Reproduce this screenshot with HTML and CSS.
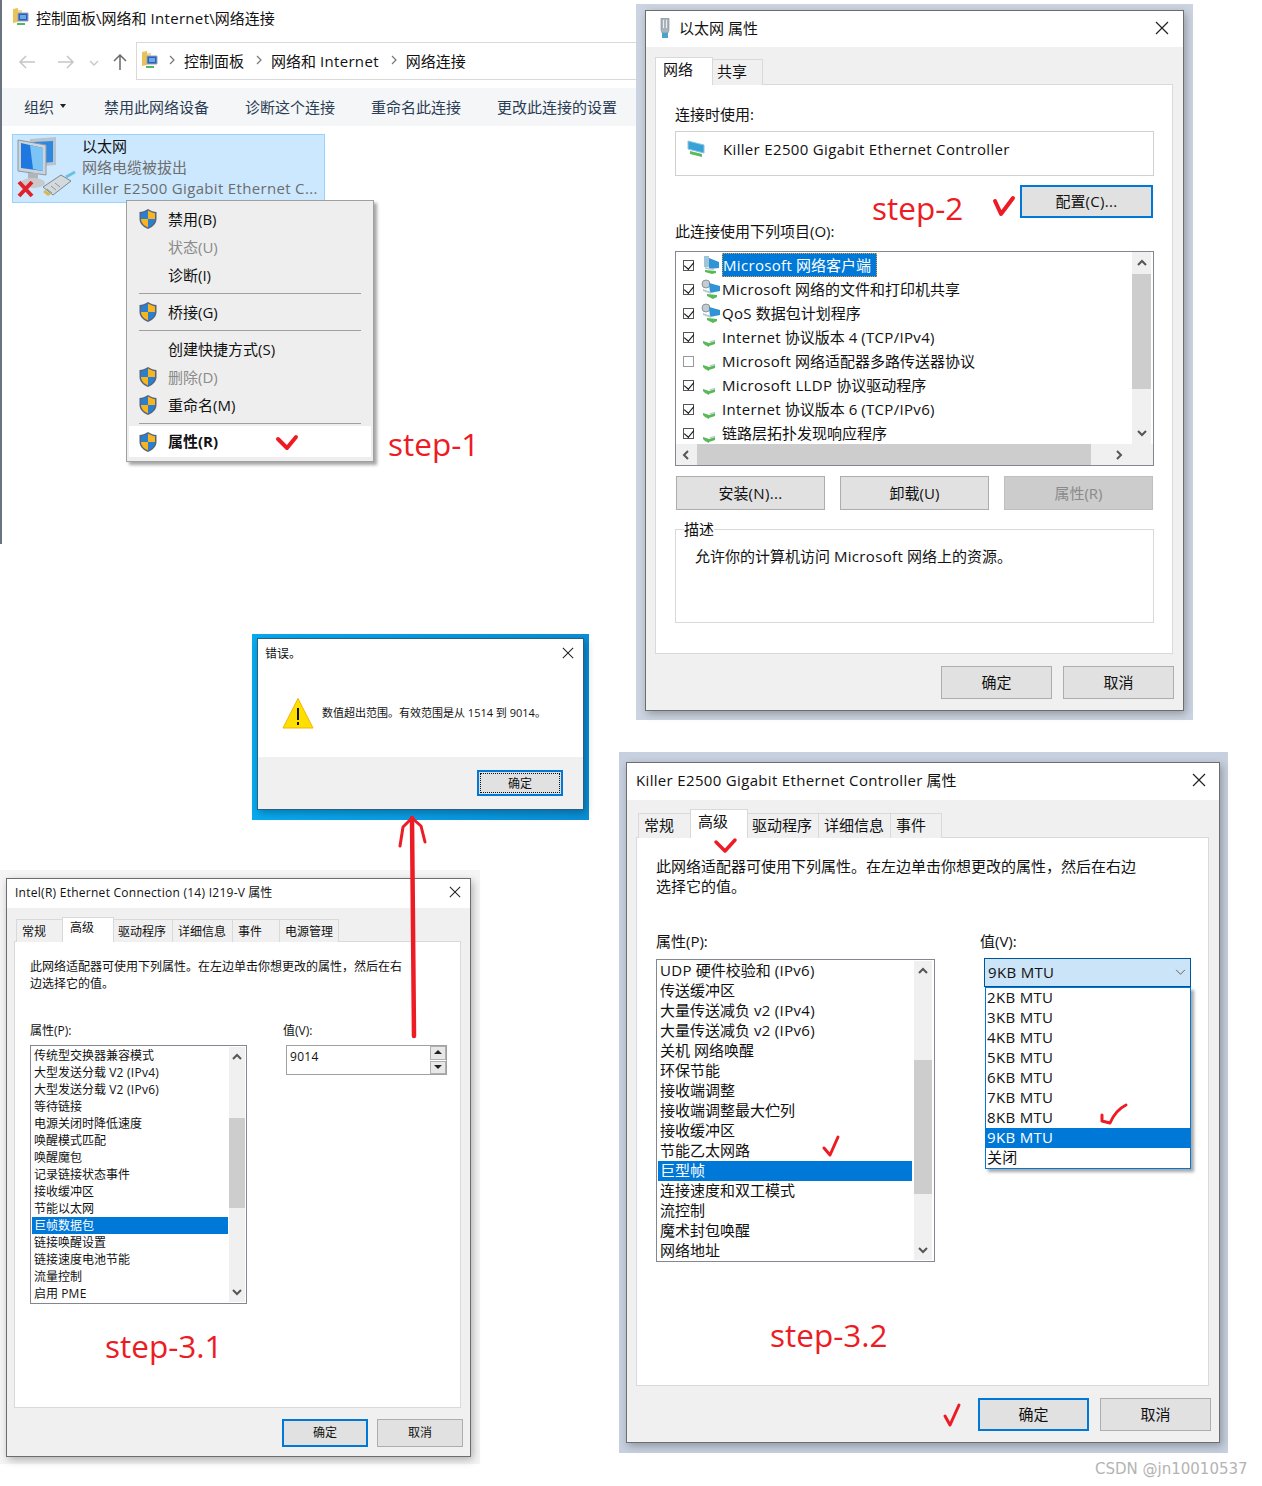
FILE: index.html
```html
<!DOCTYPE html>
<html lang="zh-CN">
<head>
    <meta charset="UTF-8">
    <title>网络连接 巨型帧设置</title>
    <link rel="stylesheet" href="styles.css">
</head>
<body>
<svg class="sprites" aria-hidden="true">
    <symbol id="shield" viewBox="0 0 20 22">
        <path d="M10 1C7 3 4 4 1.500 4v7c0 5 4.500 8.500 8.500 10 4-1.500 8.500-5 8.500-10V4C16 4 13 3 10 1z" fill="#55657f"/>
        <path d="M10 2.500C7.500 4 5 5 3 5.200V11h7z" fill="#2a7fd0"/>
        <path d="M10 2.500c2.500 1.500 5 2.500 7 2.700V11h-7z" fill="#f9b51e"/>
        <path d="M3 11h7v8.400C6.500 18 3 15 3 11z" fill="#f9b51e"/>
        <path d="M17 11h-7v8.400c3.500-1.400 7-4.400 7-8.400z" fill="#2a7fd0"/>
    </symbol>
    <symbol id="close" viewBox="0 0 14 14"><path d="M1 1l12 12M13 1L1 13" fill="none" stroke="#222" stroke-width="1.200"/></symbol>
    <symbol id="up" viewBox="0 0 12 8"><path d="M2 6l4-4 4 4" fill="none" stroke="#555" stroke-width="2"/></symbol>
    <symbol id="down" viewBox="0 0 12 8"><path d="M2 2l4 4 4-4" fill="none" stroke="#555" stroke-width="2"/></symbol>
    <symbol id="left" viewBox="0 0 8 12"><path d="M6 2L2 6l4 4" fill="none" stroke="#555" stroke-width="2"/></symbol>
    <symbol id="right" viewBox="0 0 8 12"><path d="M2 2l4 4-4 4" fill="none" stroke="#555" stroke-width="2"/></symbol>
    <symbol id="crumb" viewBox="0 0 8 12"><path d="M2 2l4 4-4 4" fill="none" stroke="#777" stroke-width="1.200"/></symbol>
    <symbol id="folder" viewBox="0 0 18 18">
        <path d="M1 1l5-1v14l-5 1z" fill="#e8c35a"/>
        <path d="M6 2h4v3H6z" fill="#f2d98a"/>
        <path d="M6 5h10v8H6z" fill="#2a5fc0" stroke="#9aa6b4"/>
        <path d="M8 7h6v4H8z" fill="#6aa8e8"/>
        <path d="M5 15h8v2H5z" fill="#55b560"/>
    </symbol>
    <symbol id="nic" viewBox="0 0 18 18">
        <path d="M1 2l16 4v8L1 10z" fill="#3aa0d8" stroke="#8ac4dc"/>
        <path d="M3 12l12 3v3L3 15z" fill="#5cb85c"/>
    </symbol>
    <symbol id="client" viewBox="0 0 20 20">
        <path d="M3 1h5v11H3z" fill="#9fc4d8"/>
        <path d="M8 3l10 4v6l-10 1z" fill="#2f93d6"/>
        <path d="M4 12l9 2v1l-9-1z" fill="#b8c8d0"/>
        <path d="M4 15l11 1v2l-4 1-7-2z" fill="#57b957"/>
    </symbol>
    <symbol id="service" viewBox="0 0 20 20">
        <circle cx="5" cy="5" r="4" fill="#c4ccd2" stroke="#8a949c"/>
        <path d="M8 4l11 3v5l-10 2z" fill="#2f93d6"/>
        <path d="M2 10l8 3v2l-8-3z" fill="#b8c8d0"/>
        <path d="M6 15l10 1v2l-4 2-6-3z" fill="#57b957"/>
    </symbol>
    <symbol id="proto" viewBox="0 0 20 20">
        <path d="M2 14l6 2 6-2v3l-6 2v1l-4-2-2-2z" fill="#57b957"/>
        <path d="M9 14l5-1v1l-5 1z" fill="#b7c4bb"/>
    </symbol>
    <symbol id="plug" viewBox="0 0 12 20">
        <path d="M2 0h8v12l-1 3H3l-1-3z" fill="#a9b4bc" stroke="#7f8b94" stroke-width=".6"/>
        <path d="M4 2h1v8H4zM7 2h1v8H7z" fill="#e9eef1"/>
        <path d="M3 15h6v5H3z" fill="#4aa3c8"/>
    </symbol>
</svg>

<main class="canvas">
    <!-- Explorer behind the context menu -->
    <section class="explorer">
        <div class="ex-title"><svg class="ic-folder"><use href="#folder"/></svg><span>控制面板\网络和 <span class="la">Internet</span>\网络连接</span></div>
        <div class="ex-nav">
            <svg class="nav-arrows" viewBox="0 0 112 20">
                <path d="M2 10h15M8 4l-6 6 6 6" fill="none" stroke="#c6c6c6" stroke-width="1.500"/>
                <path d="M40 10h15M49 4l6 6-6 6" fill="none" stroke="#c6c6c6" stroke-width="1.500"/>
                <path d="M72 9l4 4 4-4" fill="none" stroke="#c6c6c6" stroke-width="1.300"/>
                <path d="M102 18V4M96 9l6-6 6 6" fill="none" stroke="#6a6a6a" stroke-width="1.500"/>
            </svg>
            <div class="ex-address">
                <svg class="ic-folder"><use href="#folder"/></svg>
                <svg class="ic-crumb"><use href="#crumb"/></svg><span>控制面板</span>
                <svg class="ic-crumb"><use href="#crumb"/></svg><span>网络和 <span class="la">Internet</span></span>
                <svg class="ic-crumb"><use href="#crumb"/></svg><span>网络连接</span>
            </div>
        </div>
        <div class="ex-toolbar">
            <span class="organize">组织<i class="caret"></i></span>
            <span>禁用此网络设备</span>
            <span>诊断这个连接</span>
            <span>重命名此连接</span>
            <span>更改此连接的设置</span>
        </div>
        <div class="conn-item">
            <svg class="ic-net" viewBox="0 0 60 63">
                <path d="M14 2l26-2v28l-26 2z" fill="#b8c4d0"/>
                <path d="M17 5l20-1v21l-20 2z" fill="#2f88e0"/>
                <path d="M2 3l28 5v30L2 34z" fill="#ccd4da" stroke="#8a97a4"/>
                <path d="M5 6l22 5v23L5 31z" fill="#1f78e0"/>
                <path d="M14 8l13 3v23l-10-2z" fill="#7cc4f5"/>
                <path d="M12 36h10v6H12z" fill="#aeb6bc"/>
                <ellipse cx="17" cy="46" rx="12" ry="5" fill="#c9c9c9"/>
                <path d="M27 50l18-12 10 6-18 14z" fill="#d3d9dd" stroke="#7a8a8a"/>
                <path d="M31 52l5 4M35 49l5 4M39 46l5 4" stroke="#8a9a9a"/>
                <path d="M29 53l6 4-3 2-5-4z" fill="#d9b84a"/>
                <path d="M50 40l9-5" stroke="#6cc0e0" stroke-width="3"/>
                <path d="M3 45l13 14M16 45L3 59" stroke="#e3202a" stroke-width="4"/>
            </svg>
            <div class="conn-text">
                <div class="conn-name">以太网</div>
                <div>网络电缆被拔出</div>
                <div class="la">Killer E2500 Gigabit Ethernet C...</div>
            </div>
        </div>

        <div class="ctx-menu">
            <div class="ctx-row"><svg class="ic-shield"><use href="#shield"/></svg>禁用(B)</div>
            <div class="ctx-row off"><span class="ic-shield"></span>状态(U)</div>
            <div class="ctx-row"><span class="ic-shield"></span>诊断(I)</div>
            <div class="ctx-sep"></div>
            <div class="ctx-row"><svg class="ic-shield"><use href="#shield"/></svg>桥接(G)</div>
            <div class="ctx-sep"></div>
            <div class="ctx-row"><span class="ic-shield"></span>创建快捷方式(S)</div>
            <div class="ctx-row off"><svg class="ic-shield"><use href="#shield"/></svg>删除(D)</div>
            <div class="ctx-row"><svg class="ic-shield"><use href="#shield"/></svg>重命名(M)</div>
            <div class="ctx-sep ctx-sep-last"></div>
            <div class="ctx-row ctx-active"><svg class="ic-shield"><use href="#shield"/></svg>属性(R)</div>
        </div>
    </section>

    <!-- step-2 -->
    <section class="band band-eth">
        <div class="win">
            <div class="titlebar title-eth"><svg class="ic-plug"><use href="#plug"/></svg><span>以太网 属性</span><svg class="ic-close"><use href="#close"/></svg></div>
            <div class="win-body body-eth">
                <div class="tabs tabs-eth">
                    <div class="tab active">网络</div>
                    <div class="tab">共享</div>
                </div>
                <div class="panel panel-eth">
                    <div class="line">连接时使用:</div>
                    <div class="adapter-box"><svg class="ic-nic"><use href="#nic"/></svg><span class="la">Killer E2500 Gigabit Ethernet Controller</span></div>
                    <div class="config-row"><button class="btn btn-focus btn-config">配置<span class="la">(C)...</span></button></div>
                    <div class="line line-items">此连接使用下列项目(O):</div>
                    <div class="item-list">
                        <div class="item-rows">
                            <div class="item"><i class="cb on"></i><svg class="ic-row"><use href="#client"/></svg><span class="item-sel"><span class="la">Microsoft</span> 网络客户端</span></div>
                            <div class="item"><i class="cb on"></i><svg class="ic-row"><use href="#service"/></svg><span><span class="la">Microsoft</span> 网络的文件和打印机共享</span></div>
                            <div class="item"><i class="cb on"></i><svg class="ic-row"><use href="#service"/></svg><span><span class="la">QoS</span> 数据包计划程序</span></div>
                            <div class="item"><i class="cb on"></i><svg class="ic-row"><use href="#proto"/></svg><span><span class="la">Internet</span> 协议版本 4 <span class="la">(TCP/IPv4)</span></span></div>
                            <div class="item"><i class="cb"></i><svg class="ic-row"><use href="#proto"/></svg><span><span class="la">Microsoft</span> 网络适配器多路传送器协议</span></div>
                            <div class="item"><i class="cb on"></i><svg class="ic-row"><use href="#proto"/></svg><span><span class="la">Microsoft LLDP</span> 协议驱动程序</span></div>
                            <div class="item"><i class="cb on"></i><svg class="ic-row"><use href="#proto"/></svg><span><span class="la">Internet</span> 协议版本 6 <span class="la">(TCP/IPv6)</span></span></div>
                            <div class="item"><i class="cb on"></i><svg class="ic-row"><use href="#proto"/></svg><span>链路层拓扑发现响应程序</span></div>
                        </div>
                        <div class="vscroll vscroll-eth">
                            <svg class="sb-arrow"><use href="#up"/></svg>
                            <div class="sb-thumb"></div>
                            <svg class="sb-arrow sb-end"><use href="#down"/></svg>
                        </div>
                        <div class="hscroll">
                            <svg class="sb-harrow"><use href="#left"/></svg>
                            <div class="sb-hthumb"></div>
                            <svg class="sb-harrow sb-hright"><use href="#right"/></svg>
                        </div>
                    </div>
                    <div class="action-row">
                        <button class="btn">安装<span class="la">(N)...</span></button>
                        <button class="btn">卸载(U)</button>
                        <button class="btn btn-off">属性(R)</button>
                    </div>
                    <fieldset class="desc">
                        <legend>描述</legend>
                        <div class="desc-text">允许你的计算机访问 <span class="la">Microsoft</span> 网络上的资源。</div>
                    </fieldset>
                </div>
                <div class="footer footer-lg">
                    <button class="btn">确定</button>
                    <button class="btn">取消</button>
                </div>
            </div>
        </div>
    </section>

    <!-- error box -->
    <section class="band band-err">
        <div class="win win-err">
            <div class="titlebar title-err"><span>错误。</span><svg class="ic-close"><use href="#close"/></svg></div>
            <div class="err-msg">
                <svg class="ic-warn" viewBox="0 0 32 32">
                    <path d="M16 1.500L31 31H1z" fill="#ffdf00" stroke="#f5b400"/>
                    <path d="M15 11h2v12h-2zM15 25h2v3h-2z" fill="#111"/>
                </svg>
                <span>数值超出范围。有效范围是从 1514 到 9014。</span>
            </div>
            <div class="err-footer"><button class="btn btn-focus btn-err"><span>确定</span></button></div>
        </div>
    </section>

    <!-- step-3.1 -->
    <section class="band band-intel">
        <div class="win">
            <div class="titlebar title-intel"><span><span class="la">Intel(R) Ethernet Connection (14) I219-V</span> 属性</span><svg class="ic-close"><use href="#close"/></svg></div>
            <div class="win-body body-intel">
                <div class="tabs tabs-intel">
                    <div class="tab">常规</div>
                    <div class="tab active">高级</div>
                    <div class="tab">驱动程序</div>
                    <div class="tab">详细信息</div>
                    <div class="tab">事件</div>
                    <div class="tab">电源管理</div>
                </div>
                <div class="panel panel-intel">
                    <p class="hint">此网络适配器可使用下列属性。在左边单击你想更改的属性，然后在右<br>边选择它的值。</p>
                    <div class="prop-grid">
                        <div class="prop-col">
                            <div class="line">属性(P):</div>
                            <div class="prop-list">
                                <div class="prop-rows">
                                    <div>传统型交换器兼容模式</div>
                                    <div>大型发送分载 <span class="la">V2 (IPv4)</span></div>
                                    <div>大型发送分载 <span class="la">V2 (IPv6)</span></div>
                                    <div>等待链接</div>
                                    <div>电源关闭时降低速度</div>
                                    <div>唤醒模式匹配</div>
                                    <div>唤醒魔包</div>
                                    <div>记录链接状态事件</div>
                                    <div>接收缓冲区</div>
                                    <div>节能以太网</div>
                                    <div class="sel">巨帧数据包</div>
                                    <div>链接唤醒设置</div>
                                    <div>链接速度电池节能</div>
                                    <div>流量控制</div>
                                    <div>启用 <span class="la">PME</span></div>
                                </div>
                                <div class="vscroll vscroll-intel">
                                    <svg class="sb-arrow"><use href="#up"/></svg>
                                    <div class="sb-thumb"></div>
                                    <svg class="sb-arrow sb-end"><use href="#down"/></svg>
                                </div>
                            </div>
                        </div>
                        <div class="value-col">
                            <div class="line">值(V):</div>
                            <div class="spin-input">
                                <span class="la">9014</span>
                                <div class="spin"><i class="spin-up"></i><i class="spin-down"></i></div>
                            </div>
                        </div>
                    </div>
                </div>
                <div class="footer footer-sm">
                    <button class="btn btn-focus">确定</button>
                    <button class="btn">取消</button>
                </div>
            </div>
        </div>
    </section>

    <!-- step-3.2 -->
    <section class="band band-killer">
        <div class="win">
            <div class="titlebar title-killer"><span><span class="la">Killer E2500 Gigabit Ethernet Controller</span> 属性</span><svg class="ic-close"><use href="#close"/></svg></div>
            <div class="win-body body-killer">
                <div class="tabs tabs-killer">
                    <div class="tab">常规</div>
                    <div class="tab active">高级</div>
                    <div class="tab">驱动程序</div>
                    <div class="tab">详细信息</div>
                    <div class="tab">事件</div>
                </div>
                <div class="panel panel-killer">
                    <p class="hint">此网络适配器可使用下列属性。在左边单击你想更改的属性，然后在右边<br>选择它的值。</p>
                    <div class="prop-grid">
                        <div class="prop-col">
                            <div class="line">属性(P):</div>
                            <div class="prop-list">
                                <div class="prop-rows">
                                    <div><span class="la">UDP</span> 硬件校验和 <span class="la">(IPv6)</span></div>
                                    <div>传送缓冲区</div>
                                    <div>大量传送减负 <span class="la">v2 (IPv4)</span></div>
                                    <div>大量传送减负 <span class="la">v2 (IPv6)</span></div>
                                    <div>关机 网络唤醒</div>
                                    <div>环保节能</div>
                                    <div>接收端调整</div>
                                    <div>接收端调整最大伫列</div>
                                    <div>接收缓冲区</div>
                                    <div>节能乙太网路</div>
                                    <div class="sel">巨型帧</div>
                                    <div>连接速度和双工模式</div>
                                    <div>流控制</div>
                                    <div>魔术封包唤醒</div>
                                    <div>网络地址</div>
                                </div>
                                <div class="vscroll vscroll-killer">
                                    <svg class="sb-arrow"><use href="#up"/></svg>
                                    <div class="sb-thumb"></div>
                                    <svg class="sb-arrow sb-end"><use href="#down"/></svg>
                                </div>
                            </div>
                        </div>
                        <div class="value-col">
                            <div class="line">值(V):</div>
                            <div class="combo">
                                <span class="la">9KB MTU</span>
                                <svg class="combo-chev" viewBox="0 0 12 8"><path d="M1 1l5 5 5-5" fill="none" stroke="#555"/></svg>
                                <div class="combo-list la">
                                    <div>2KB MTU</div>
                                    <div>3KB MTU</div>
                                    <div>4KB MTU</div>
                                    <div>5KB MTU</div>
                                    <div>6KB MTU</div>
                                    <div>7KB MTU</div>
                                    <div>8KB MTU</div>
                                    <div class="sel">9KB MTU</div>
                                    <div>关闭</div>
                                </div>
                            </div>
                        </div>
                    </div>
                </div>
                <div class="footer footer-lg">
                    <button class="btn btn-focus">确定</button>
                    <button class="btn">取消</button>
                </div>
            </div>
        </div>
    </section>

    <!-- hand drawn marks on top of the screenshots -->
    <svg class="marks" viewBox="0 0 1262 1486">
        <g fill="none" stroke="#ed1c24" stroke-linecap="round" stroke-linejoin="round">
            <path d="M278 439l9 9 9-11" stroke-width="4"/>
            <path d="M995 201l6 13 12-16" stroke-width="4"/>
            <path d="M716 842l9 9 10-11" stroke-width="3.500"/>
            <path d="M824 1148l6 7 8-18" stroke-width="3"/>
            <path d="M1126 1105c-8 4-13 11-16 18l-8-2 0-6" stroke-width="3"/>
            <path d="M945 1416l5 9 9-20" stroke-width="3"/>
            <path d="M414 1036l-1-110-1-108" stroke-width="4.500"/>
            <path d="M400 846l3-19 9-9 9 8 4 16" stroke-width="3"/>
        </g>
    </svg>
    <div class="step step-1">step-1</div>
    <div class="step step-2">step-2</div>
    <div class="step step-31">step-3.1</div>
    <div class="step step-32">step-3.2</div>
    <div class="watermark">CSDN @jn10010537</div>
</main>
</body>
</html>
```

FILE: styles.css
```css
* {
    box-sizing: border-box;
}

body {
    margin: 0;
    background: #fff;
    color: #111;
    font-family: "Open Sans", "Noto Sans CJK SC", sans-serif;
    font-size: 15px;
}

/* latin runs are a bit wider in the screenshot */
.la {
    letter-spacing: .022em;
}

.sprites {
    position: absolute;
    width: 0;
    height: 0;
}

.canvas {
    position: relative;
    width: 1262px;
    height: 1486px;
    overflow: hidden;
}

/* Explorer */
.explorer {
    position: absolute;
    left: 0;
    top: 0;
    width: 636px;
    height: 544px;
    border-left: 2px solid #6a7480;
}

.ex-title {
    display: flex;
    align-items: center;
    height: 36px;
    padding: 0 0 2px 10px;
}

.ic-folder {
    width: 18px;
    height: 18px;
    margin-right: 6px;
    flex: none;
}

.ex-nav {
    display: flex;
    height: 38px;
    margin-top: 6px;
}

.nav-arrows {
    width: 112px;
    height: 20px;
    margin: 10px 6px 0 16px;
    flex: none;
}

.ex-address {
    display: flex;
    align-items: center;
    flex: 1;
    padding: 0 0 2px 4px;
    border: 1px solid #d9d9d9;
    border-right: 0;
}

.ex-address .ic-folder {
    margin-right: 9px;
}

.ex-address > span {
    margin-right: 11px;
}

.ic-crumb {
    width: 8px;
    height: 12px;
    margin-right: 8px;
    flex: none;
}

.ex-toolbar {
    display: flex;
    align-items: center;
    gap: 36px;
    height: 38px;
    margin-top: 8px;
    padding: 0 0 2px 22px;
    background: #f5f6f7;
    color: #2b3d55;
}

.organize {
    display: flex;
    align-items: center;
}

.caret {
    width: 0;
    height: 0;
    margin: 0 2px 0 6px;
    border-left: 3.500px solid transparent;
    border-right: 3.500px solid transparent;
    border-top: 4px solid #222;
}

.conn-item {
    display: flex;
    width: 313px;
    height: 69px;
    margin: 8px 0 0 10px;
    background: #cce8ff;
    border: 1px solid #99d1ff;
    color: #6d6d6d;
    line-height: 21px;
}

.ic-net {
    width: 60px;
    height: 63px;
    margin: 2px 6px 0 3px;
    flex: none;
}

.conn-text {
    padding-top: 1px;
    white-space: nowrap;
}

.conn-name {
    color: #111;
}

/* context menu */
.ctx-menu {
    position: absolute;
    left: 124px;
    top: 200px;
    width: 248px;
    height: 262px;
    padding: 4px 2px 0;
    background: #eee;
    border: 1px solid #a0a0a0;
    box-shadow: 3px 3px 3px rgba(0, 0, 0, .35);
}

.ctx-row {
    display: flex;
    align-items: center;
    height: 28px;
    padding: 0 0 2px 9px;
}

.ctx-row.off {
    color: #8a8a8a;
}

.ctx-active {
    height: 31px;
    background: #fff;
    font-weight: 700;
}

.ic-shield {
    width: 20px;
    height: 22px;
    margin: 2px 10px 0 0;
    flex: none;
}

.ctx-sep {
    height: 1px;
    margin: 4px 10px;
    background: #a0a0a0;
}

.ctx-sep-last {
    margin-bottom: 2px;
}

/* windows */
.band {
    position: absolute;
    display: flex;
}

.band-eth {
    left: 636px;
    top: 4px;
    width: 557px;
    height: 716px;
    padding: 6px 9px 9px;
    background: #cbd4e0;
}

.band-err {
    left: 252px;
    top: 634px;
    width: 337px;
    height: 186px;
    padding: 4px 5px 10px;
    background: linear-gradient(90deg, #08aaf0, #0a90d8);
}

.band-intel {
    left: 0;
    top: 870px;
    width: 480px;
    height: 594px;
    padding: 8px 9px 7px 6px;
    background: #f5f5f5;
}

.band-killer {
    left: 619px;
    top: 752px;
    width: 609px;
    height: 701px;
    padding: 10px 8px 10px 7px;
    background: #c6d0de;
}

.win {
    display: flex;
    flex-direction: column;
    flex: 1;
    min-width: 0;
    background: #f0f0f0;
    border: 1px solid #6d6d6d;
    box-shadow: 2px 3px 8px rgba(0, 0, 0, .28);
}

.titlebar {
    display: flex;
    align-items: center;
    flex: none;
    background: #fff;
}

.titlebar > span {
    flex: 1;
}

.ic-close {
    width: 14px;
    height: 14px;
    flex: none;
}

.ic-plug {
    width: 12px;
    height: 20px;
    margin-right: 8px;
    flex: none;
}

.title-eth {
    height: 36px;
    padding: 0 14px 3px 13px;
}

.title-err {
    height: 30px;
    padding: 0 8px 2px 7px;
    font-size: 12px;
}

.title-err .ic-close {
    width: 12px;
    height: 12px;
    margin-right: 1px;
}

.title-intel {
    height: 29px;
    padding: 0 9px 3px 8px;
    font-size: 12px;
}

.title-intel .ic-close {
    width: 12px;
    height: 12px;
}

.title-killer {
    height: 37px;
    padding: 0 13px 3px 9px;
}

.title-killer > span {
    margin-bottom: 2px;
}

.win-body {
    display: flex;
    flex-direction: column;
    flex: 1;
    min-height: 0;
}

.body-eth {
    padding: 10px 10px 11px 9px;
}

.body-intel {
    padding: 9px 9px 9px 7px;
    font-size: 12px;
}

.body-killer {
    padding: 9px 10px 11px 9px;
}

/* tabs */
.tabs {
    display: flex;
    align-items: flex-end;
    flex: none;
    position: relative;
    margin-bottom: -1px;
    z-index: 1;
}

.tab {
    white-space: nowrap;
    background: #f0f0f0;
    border: 1px solid #d9d9d9;
    border-bottom: 0;
}

.tab.active {
    background: #fff;
}

.tabs-eth .tab {
    height: 26px;
    line-height: 22px;
    margin-left: -1px;
}

.tabs-eth .tab.active {
    height: 28px;
    line-height: 22px;
    margin-left: 0;
    width: 58px;
    padding-left: 7px;
}

.tabs-eth .tab:nth-child(2) {
    width: 51px;
    padding-left: 4px;
}

.tabs-killer {
    margin-left: 2px;
}

.tabs-killer .tab {
    height: 25px;
    line-height: 23px;
    margin-left: -1px;
}

.tabs-killer .tab.active {
    height: 29px;
    line-height: 22px;
}

.tabs-killer .tab:nth-child(1) { width: 53px; padding-left: 5px; margin-left: 0; }
.tabs-killer .tab:nth-child(2) { width: 58px; padding-left: 7px; }
.tabs-killer .tab:nth-child(3) { width: 72px; padding-left: 4px; }
.tabs-killer .tab:nth-child(4) { width: 73px; padding-left: 5px; }
.tabs-killer .tab:nth-child(5) { width: 52px; padding-left: 5px; }

.tabs-intel {
    margin-left: 2px;
}

.tabs-intel .tab {
    height: 23px;
    line-height: 23px;
    margin-left: -1px;
}

.tabs-intel .tab.active {
    height: 25px;
    line-height: 20px;
}

.tabs-intel .tab:nth-child(1) { width: 47px; padding-left: 5px; margin-left: 0; }
.tabs-intel .tab:nth-child(2) { width: 52px; padding-left: 7px; }
.tabs-intel .tab:nth-child(3) { width: 60px; padding-left: 4px; }
.tabs-intel .tab:nth-child(4) { width: 61px; padding-left: 5px; }
.tabs-intel .tab:nth-child(5) { width: 48px; padding-left: 5px; }
.tabs-intel .tab:nth-child(6) { width: 60px; padding-left: 5px; }

.panel {
    flex: 1;
    min-height: 0;
    background: #fff;
    border: 1px solid #d9d9d9;
}

.panel-eth {
    padding: 18px 18px 0 19px;
}

.panel-killer {
    padding: 18px 19px 0 19px;
}

.panel-intel {
    padding: 16px 14px 0 15px;
}

.line {
    line-height: 20px;
    height: 20px;
    white-space: nowrap;
}

.panel-eth > .line {
    line-height: 22px;
}

.btn {
    height: 33px;
    padding: 0 0 2px;
    font: inherit;
    color: #111;
    background: #e1e1e1;
    border: 1px solid #adadad;
}

.btn-focus {
    border: 2px solid #0078d7;
}

.btn-off {
    color: #8a8a8a;
    background: #ccc;
    border-color: #bfbfbf;
}

/* step-2 window */
.adapter-box {
    display: flex;
    align-items: flex-start;
    height: 45px;
    margin-top: 8px;
    padding: 7px 0 0 11px;
    line-height: 20px;
    background: #fff;
    border: 1px solid #d0d0d0;
}

.ic-nic {
    width: 18px;
    height: 18px;
    margin-right: 18px;
    flex: none;
}

.config-row {
    display: flex;
    justify-content: flex-end;
    margin: 9px 1px 0 0;
}

.btn-config {
    width: 133px;
}

.panel-eth > .line-items {
    margin-top: 3px;
    line-height: 20px;
}

.item-list {
    display: grid;
    grid-template-columns: 1fr 19px 2px;
    grid-template-rows: 192px 21px;
    height: 215px;
    margin-top: 10px;
    border: 1px solid #828790;
}

.item-rows {
    padding-top: 1px;
    overflow: hidden;
}

.item {
    display: flex;
    align-items: center;
    height: 24px;
    padding-left: 7px;
    white-space: nowrap;
}

.item > span {
    margin-bottom: 2px;
}

.cb {
    position: relative;
    width: 11px;
    height: 11px;
    margin-right: 7px;
    background: #fff;
    border: 1px solid #555;
    flex: none;
}

.cb:not(.on) {
    border-color: #999;
}

.cb.on::after {
    content: "";
    position: absolute;
    left: 2px;
    top: -1px;
    width: 5px;
    height: 8px;
    border: solid #111;
    border-width: 0 1.600px 1.600px 0;
    transform: rotate(40deg);
}

.ic-row {
    width: 20px;
    height: 20px;
    margin-right: 1px;
    flex: none;
}

.item > .item-sel {
    height: 24px;
    margin-bottom: 0;
    padding: 0 6px 0 1px;
    color: #fff;
    background: #0078d7;
    outline: 1px dotted #f0a030;
    outline-offset: -1px;
    line-height: 24px;
}

.vscroll {
    display: flex;
    flex-direction: column;
    align-items: stretch;
    background: #f0f0f0;
    min-height: 0;
}

.sb-arrow {
    width: 12px;
    height: 8px;
    margin: 7px auto;
    flex: none;
}

.sb-end {
    margin-top: auto;
}

.sb-thumb {
    background: #cdcdcd;
    flex: none;
}

.vscroll-eth .sb-thumb {
    height: 115px;
}

.hscroll {
    display: flex;
    align-items: center;
    grid-column: 1 / 4;
    background: #f0f0f0;
}

.sb-harrow {
    width: 8px;
    height: 12px;
    margin: 0 7px 0 6px;
    flex: none;
}

.sb-hright {
    margin-left: 24px;
}

.sb-hthumb {
    width: 394px;
    height: 100%;
    flex: none;
    background: #cdcdcd;
}

.action-row {
    display: flex;
    gap: 15px;
    margin: 10px 1px 0;
}

.action-row .btn {
    flex: 1;
    height: 34px;
}

.desc {
    height: 104px;
    margin: 9px 0 0;
    padding: 0 19px;
    border: 1px solid #d9d9d9;
}

.desc legend {
    margin-left: -11px;
    padding: 0;
    line-height: 20px;
}

.desc-text {
    margin-top: 7px;
    line-height: 20px;
}

.footer {
    display: flex;
    justify-content: flex-end;
    flex: none;
}

.footer-lg {
    gap: 11px;
    margin: 12px -1px 0 0;
}

.footer-lg .btn {
    width: 111px;
}

.band-killer .footer-lg {
    margin-right: -2px;
}

.footer-sm {
    gap: 9px;
    margin: 11px -2px 0 0;
}

.footer-sm .btn {
    width: 86px;
    height: 28px;
}

/* error box */
.win-err {
    border-color: #2a5f80;
}

.err-msg {
    display: flex;
    align-items: center;
    flex: 1;
    padding-left: 24px;
    background: #fff;
    font-size: 11px;
}

.err-msg span {
    margin-bottom: 2px;
}

.ic-warn {
    width: 32px;
    height: 32px;
    margin-right: 8px;
    flex: none;
}

.err-footer {
    display: flex;
    justify-content: flex-end;
    flex: none;
    height: 52px;
    padding: 13px 20px 0 0;
    background: #f0f0f0;
}

.btn-err {
    width: 86px;
    height: 26px;
    padding: 1px;
    font-size: 12px;
}

.btn-err span {
    display: block;
    height: 100%;
    line-height: 20px;
    border: 1px dotted #111;
}

/* advanced tab */
.hint {
    margin: 0;
    white-space: nowrap;
    line-height: 20px;
}

.panel-intel .hint {
    line-height: 17px;
}

.prop-grid {
    display: flex;
}

.panel-killer .prop-grid {
    margin-top: 35px;
}

.panel-intel .prop-grid {
    margin-top: 29px;
}

.panel-killer .value-col {
    position: relative;
    margin-left: 45px;
}

.panel-intel .value-col {
    margin-left: 36px;
}

.panel-intel .line {
    height: 17px;
    line-height: 19px;
}

.prop-list {
    display: flex;
    background: #fff;
    border: 1px solid #828790;
}

.panel-killer .prop-list {
    width: 279px;
    height: 303px;
    margin-top: 8px;
    padding: 1px 2px 1px 0;
}

.panel-intel .prop-list {
    width: 217px;
    height: 259px;
    margin-top: 7px;
    padding: 1px 1px 1px 0;
}

.prop-rows {
    flex: 1;
    min-width: 0;
    overflow: hidden;
    white-space: nowrap;
}

.prop-rows div {
    margin-left: 1px;
    padding-left: 2px;
}

.panel-killer .prop-rows {
    margin-right: 2px;
}

.panel-killer .prop-rows div {
    height: 20px;
    line-height: 18px;
}

.panel-intel .prop-rows {
    margin-right: 1px;
}

.panel-intel .prop-rows div {
    height: 17px;
    line-height: 17px;
}

.sel,
.prop-rows div.sel {
    color: #fff;
    background: #0078d7;
}

.vscroll-killer {
    width: 18px;
}

.vscroll-killer .sb-thumb {
    height: 134px;
    margin-top: 79px;
}

.vscroll-intel {
    width: 16px;
}

.vscroll-intel .sb-arrow,
.vscroll-killer .sb-arrow {
    margin-top: 6px;
    margin-bottom: 6px;
}

.vscroll-intel .sb-arrow.sb-end,
.vscroll-killer .sb-arrow.sb-end {
    margin-top: auto;
}

.vscroll-intel .sb-thumb {
    height: 90px;
    margin-top: 51px;
}

.spin-input {
    display: flex;
    justify-content: space-between;
    width: 161px;
    height: 30px;
    margin: 7px 0 0 3px;
    padding-left: 3px;
    line-height: 22px;
    background: #fff;
    border: 1px solid #a0a0a0;
}

.spin {
    display: flex;
    flex-direction: column;
    width: 16px;
    height: 28px;
    gap: 1px;
}

.spin i {
    flex: 1;
    background: #e8e8e8;
    border: 1px solid #b0b0b0;
    position: relative;
}

.spin i::after {
    content: "";
    position: absolute;
    left: 3px;
    top: 3px;
    border-left: 4px solid transparent;
    border-right: 4px solid transparent;
}

.spin-up::after {
    border-bottom: 4px solid #222;
}

.spin-down::after {
    border-top: 4px solid #222;
}

.combo {
    position: relative;
    display: flex;
    align-items: center;
    justify-content: space-between;
    width: 207px;
    height: 29px;
    margin: 7px 0 0 4px;
    padding: 0 4px 0 3px;
    background: #cce4f7;
    border: 1px solid #005499;
}

.combo > span {
    margin-bottom: 2px;
}

.combo-chev {
    width: 11px;
    height: 7px;
}

.combo-list {
    position: absolute;
    left: 0;
    top: 28px;
    width: 206px;
    height: 182px;
    background: #fff;
    border: 1px solid #0078d7;
    box-shadow: 3px 3px 3px rgba(0, 0, 0, .35);
}

.combo-list div {
    height: 20px;
    line-height: 18px;
    padding-left: 1px;
}

/* annotations */
.marks {
    position: absolute;
    left: 0;
    top: 0;
    width: 1262px;
    height: 1486px;
    pointer-events: none;
}

.step {
    position: absolute;
    color: #ed1c24;
    font-size: 31.500px;
    line-height: 40px;
    white-space: nowrap;
}

.step-1 { left: 388px; top: 424px; }
.step-2 { left: 872px; top: 188px; }
.step-31 { left: 105px; top: 1326px; }
.step-32 { left: 770px; top: 1315px; }

.watermark {
    position: absolute;
    left: 1095px;
    top: 1459px;
    color: #b4b4b4;
    font-family: "DejaVu Sans", sans-serif;
    font-size: 15px;
    line-height: 20px;
    white-space: nowrap;
}
```
